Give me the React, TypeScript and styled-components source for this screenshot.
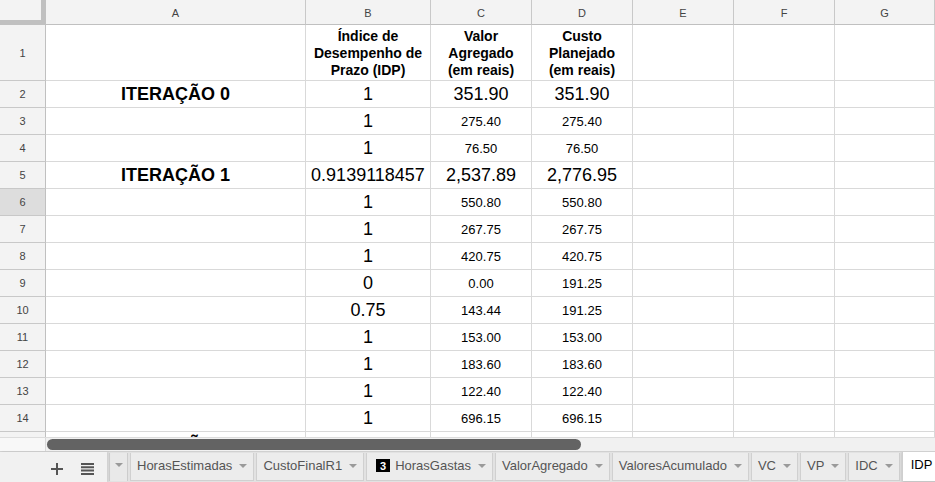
import { FC } from "react";
import styled, { createGlobalStyle } from "styled-components";

type Cell = { text?: string; size?: "big" | "small" | "title" | "head"; bold?: boolean };

const Columns = ["A", "B", "C", "D", "E", "F", "G"];

const rows: { id: number; cells: Cell[]; selected?: boolean }[] = [
  {
    id: 1,
    cells: [
      {},
      { text: "Índice de Desempenho de Prazo (IDP)", size: "head", bold: true },
      { text: "Valor Agregado (em reais)", size: "head", bold: true },
      { text: "Custo Planejado (em reais)", size: "head", bold: true },
    ],
  },
  {
    id: 2,
    cells: [
      { text: "ITERAÇÃO 0", size: "title", bold: true },
      { text: "1", size: "big" },
      { text: "351.90", size: "big" },
      { text: "351.90", size: "big" },
    ],
  },
  { id: 3, cells: [{}, { text: "1", size: "big" }, { text: "275.40" }, { text: "275.40" }] },
  { id: 4, cells: [{}, { text: "1", size: "big" }, { text: "76.50" }, { text: "76.50" }] },
  {
    id: 5,
    cells: [
      { text: "ITERAÇÃO 1", size: "title", bold: true },
      { text: "0.9139118457", size: "big" },
      { text: "2,537.89", size: "big" },
      { text: "2,776.95", size: "big" },
    ],
  },
  { id: 6, selected: true, cells: [{}, { text: "1", size: "big" }, { text: "550.80" }, { text: "550.80" }] },
  { id: 7, cells: [{}, { text: "1", size: "big" }, { text: "267.75" }, { text: "267.75" }] },
  { id: 8, cells: [{}, { text: "1", size: "big" }, { text: "420.75" }, { text: "420.75" }] },
  { id: 9, cells: [{}, { text: "0", size: "big" }, { text: "0.00" }, { text: "191.25" }] },
  { id: 10, cells: [{}, { text: "0.75", size: "big" }, { text: "143.44" }, { text: "191.25" }] },
  { id: 11, cells: [{}, { text: "1", size: "big" }, { text: "153.00" }, { text: "153.00" }] },
  { id: 12, cells: [{}, { text: "1", size: "big" }, { text: "183.60" }, { text: "183.60" }] },
  { id: 13, cells: [{}, { text: "1", size: "big" }, { text: "122.40" }, { text: "122.40" }] },
  { id: 14, cells: [{}, { text: "1", size: "big" }, { text: "696.15" }, { text: "696.15" }] },
  { id: 15, cells: [{ text: "ITERAÇÃO 2", size: "title", bold: true }, {}, {}, {}] },
];

const tabs = [
  { name: "HorasEstimadas" },
  { name: "CustoFinalR1" },
  { name: "HorasGastas", badge: "3" },
  { name: "ValorAgregado" },
  { name: "ValoresAcumulado" },
  { name: "VC" },
  { name: "VP" },
  { name: "IDC" },
];

const Caret = () => (
  <svg width="8" height="4" viewBox="0 0 8 4">
    <path d="M0 0h8L4 4z" fill="#9a9a9a" />
  </svg>
);

const App: FC = () => {
  return (
    <>
      <GlobalStyle />
      <Page>
        <Sheet>
          <Corner />
          {Columns.map((c) => (
            <ColHead key={c}>{c}</ColHead>
          ))}
          {rows.map((r) => (
            <Row key={r.id}>
              <RowHead $selected={r.selected}>{r.id}</RowHead>
              {Columns.map((c, i) => {
                const cell = r.cells[i] || {};
                return (
                  <Data key={c} $size={cell.size} $bold={cell.bold} $tall={r.id === 1}>
                    {cell.text && <span>{cell.text}</span>}
                  </Data>
                );
              })}
            </Row>
          ))}
        </Sheet>
        <ScrollStrip>
          <ScrollCorner />
          <Track>
            <Thumb />
          </Track>
        </ScrollStrip>
        <TabBar>
          <Tools>
            <ToolButton>
              <svg width="12" height="12" viewBox="0 0 12 12">
                <path d="M5 0h2v5h5v2H7v5H5V7H0V5h5z" fill="#555" />
              </svg>
            </ToolButton>
            <ToolButton>
              <svg width="13" height="12" viewBox="0 0 13 12">
                <path d="M0 0h13v2H0zM0 3.3h13v2H0zM0 6.6h13v2H0zM0 10h13v2H0z" fill="#555" />
              </svg>
            </ToolButton>
          </Tools>
          <Tabs>
            <MenuButton>
              <Caret />
            </MenuButton>
            {tabs.map((t) => (
              <Tab key={t.name}>
                {t.badge && <Badge>{t.badge}</Badge>}
                <span>{t.name}</span>
                <Caret />
              </Tab>
            ))}
            <ActiveTab>IDP</ActiveTab>
          </Tabs>
        </TabBar>
      </Page>
    </>
  );
};

const GlobalStyle = createGlobalStyle`
  html, body {
    margin: 0;
    padding: 0;
    background: #fff;
    overflow: hidden;
  }
  body {
    font-family: "Liberation Sans", Arial, sans-serif;
  }
`;

const Page = styled.div`
  width: 935px;
  height: 482px;
  display: flex;
  flex-direction: column;
  overflow: hidden;
`;

const Sheet = styled.div`
  height: 437px;
  flex: none;
  overflow: hidden;
  display: grid;
  grid-template-columns: 46px 260px 125px 101px 101px 101px 101px 100px;
  grid-template-rows: 25px 56px repeat(14, 27px);
  grid-auto-rows: 27px;
`;

const Corner = styled.div`
  background: #f3f3f3;
  border-right: 5px solid #c0c0c0;
  border-bottom: 5px solid #c0c0c0;
  box-sizing: border-box;
  width: 46px;
`;

const ColHead = styled.div`
  background: #f3f3f3;
  border-right: 1px solid #c8c8c8;
  border-bottom: 1px solid #c0c0c0;
  box-sizing: border-box;
  display: flex;
  align-items: center;
  justify-content: center;
  font-size: 11px;
  color: #444;
  padding-top: 1px;
`;

const Row = styled.div`
  display: contents;
`;

const RowHead = styled.div<{ $selected?: boolean }>`
  background: ${(p) => (p.$selected ? "#dddddd" : "#f3f3f3")};
  border-right: 1px solid #c0c0c0;
  border-bottom: 1px solid #c8c8c8;
  box-sizing: border-box;
  display: flex;
  align-items: center;
  justify-content: center;
  font-size: 11px;
  color: #444;
`;

const sizes = {
  small: "13px",
  big: "18px",
  title: "18px",
  head: "14px",
};

const Data = styled.div<{ $size?: keyof typeof sizes; $bold?: boolean; $tall?: boolean }>`
  border-right: 1px solid #d9d9d9;
  border-bottom: 1px solid #d9d9d9;
  box-sizing: border-box;
  display: flex;
  align-items: ${(p) => (p.$tall ? "flex-end" : "center")};
  justify-content: center;
  text-align: center;
  overflow: hidden;
  white-space: ${(p) => (p.$tall ? "normal" : "nowrap")};
  font-size: ${(p) => sizes[p.$size || "small"]};
  font-weight: ${(p) => (p.$bold ? 700 : 400)};
  line-height: ${(p) => (p.$tall ? "17px" : "normal")};
  color: #000;
  padding: ${(p) => (p.$tall ? "0 3px 1px" : "1px 3px 0")};
`;

const ScrollStrip = styled.div`
  height: 14px;
  flex: none;
  display: flex;
  background: #f1f1f1;
  border-top: 1px solid #dcdcdc;
  box-sizing: border-box;
`;

const ScrollCorner = styled.div`
  width: 46px;
  flex: none;
  background: #f8f8f8;
  border-right: 1px solid #d9d9d9;
  box-sizing: border-box;
`;

const Track = styled.div`
  flex: 1;
  display: flex;
  align-items: center;
  padding-left: 1px;
`;

const Thumb = styled.div`
  width: 534px;
  height: 11px;
  border-radius: 6px;
  background: #636363;
`;

const TabBar = styled.div`
  flex: 1;
  display: flex;
  background: #f1f1f1;
  border-top: 1px solid #d0d0d0;
`;

const Tools = styled.div`
  width: 107px;
  flex: none;
  display: flex;
  align-items: center;
  justify-content: flex-end;
  gap: 18px;
  padding-right: 13px;
  box-sizing: border-box;
  box-shadow: 2px 0 2px rgba(0, 0, 0, 0.08);
  z-index: 1;
`;

const ToolButton = styled.div`
  display: flex;
  align-items: center;
  padding-top: 3px;
`;

const Tabs = styled.div`
  flex: 1;
  display: flex;
  gap: 2px;
  background: #e2e2e2;
  padding-left: 2px;
  overflow: hidden;
`;

const MenuButton = styled.div`
  width: 19px;
  margin-top: 1px;
  height: 28px;
  background: #e9e9e9;
  border-left: 1px solid #d0d0d0;
  border-right: 1px solid #cccccc;
  display: flex;
  align-items: center;
  justify-content: center;
  padding-bottom: 4px;
  box-sizing: border-box;
  flex: none;
`;

const Tab = styled.div`
  height: 28px;
  margin-top: 1px;
  background: #ececec;
  border: 1px solid #d0d0d0;
  border-top: none;
  box-sizing: border-box;
  display: flex;
  align-items: center;
  gap: 7px;
  padding: 0 6px 2px 6px;
  font-size: 13px;
  color: #555;
  white-space: nowrap;
  flex: none;
  svg {
    margin-top: 1px;
  }
`;

const Badge = styled.span`
  background: #000;
  color: #fff;
  font-weight: 700;
  font-size: 11px;
  width: 14px;
  height: 13px;
  display: inline-flex;
  align-items: center;
  justify-content: center;
  margin: 0 -2px 0 3px;
`;

const ActiveTab = styled.div`
  height: 30px;
  margin-top: -1px;
  background: #fff;
  border-left: 1px solid #cfcfcf;
  box-sizing: border-box;
  display: flex;
  align-items: flex-start;
  padding: 6px 8px 0 8px;
  font-size: 13px;
  color: #000;
  flex: none;
  box-shadow: 0 1px 3px rgba(0, 0, 0, 0.2);
`;

export default App;
